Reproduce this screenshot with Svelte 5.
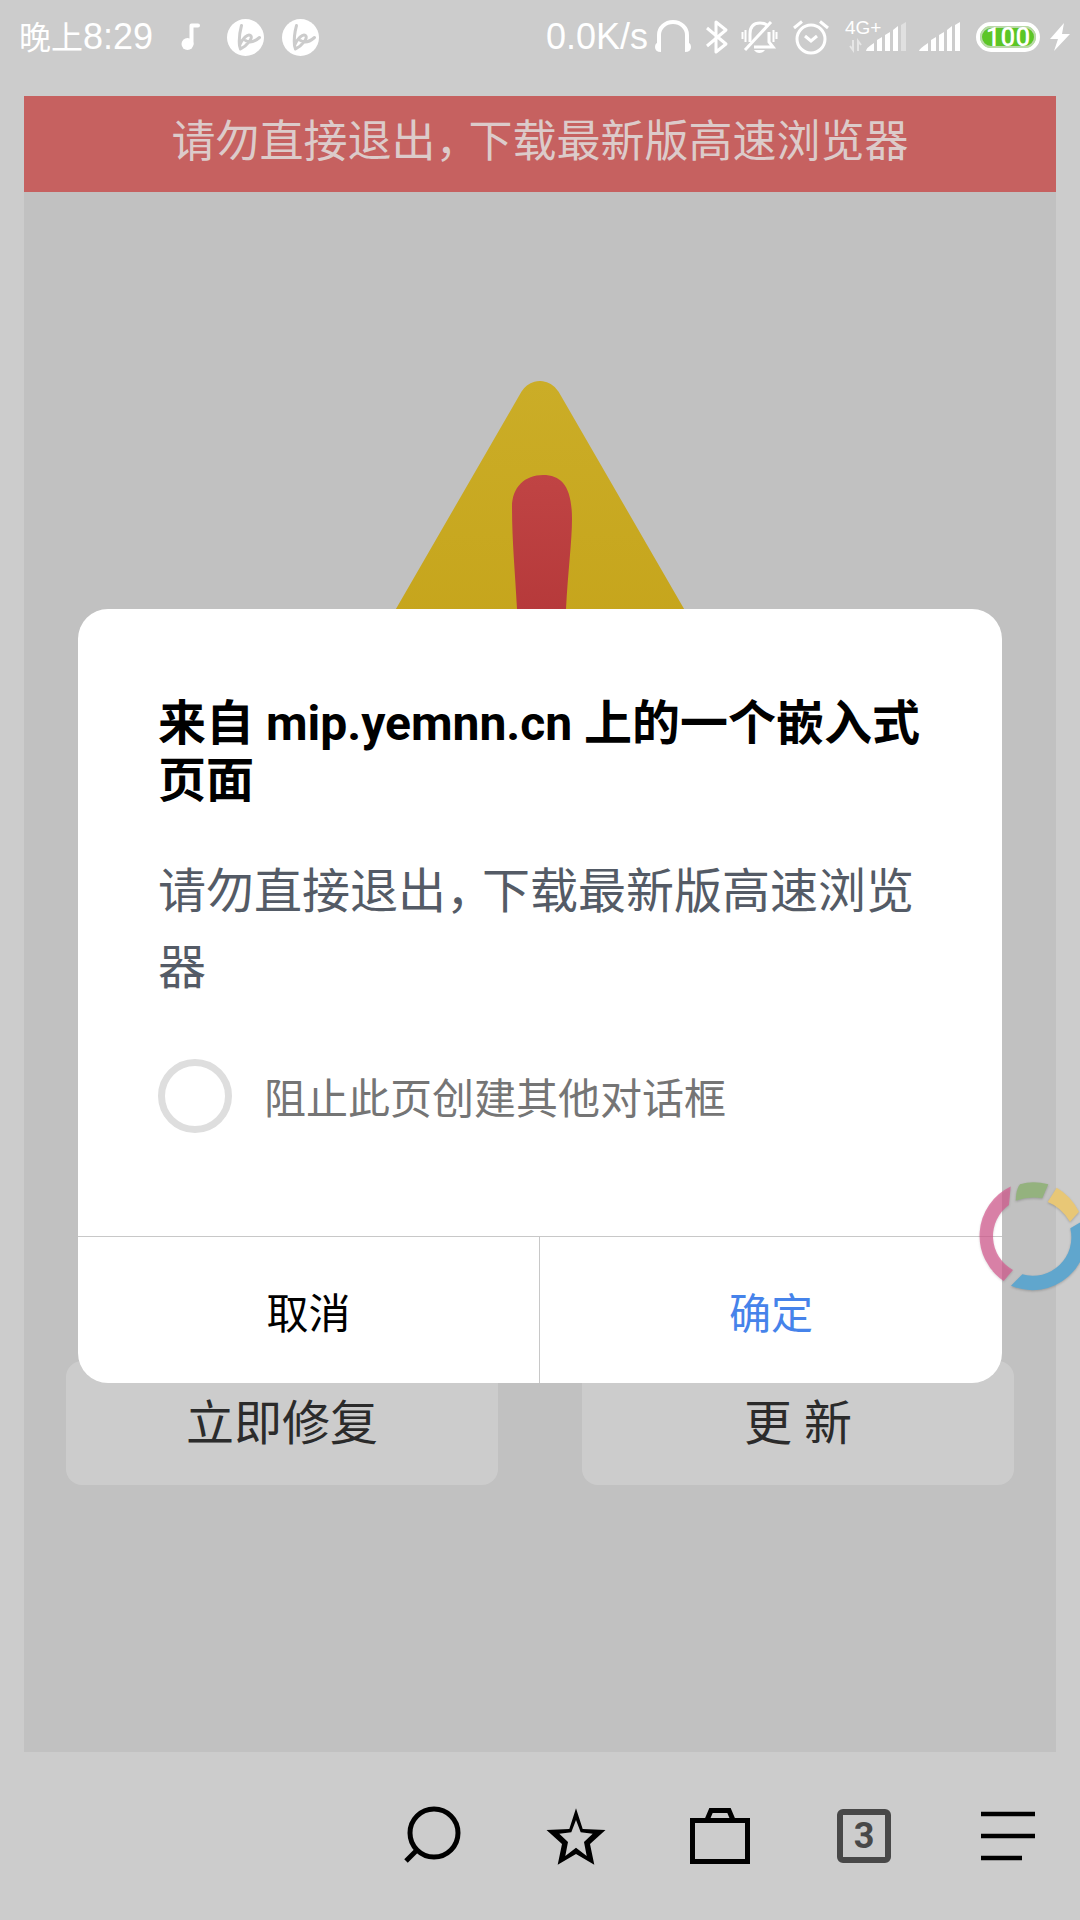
<script>
  let blockDialogs = $state(false);
  const badges = [1, 2];
</script>

<div class="screen">
  <header class="status">
    <div class="status-left">
      <span class="clock"><span class="clock-period">晚上</span>8:29</span>
      <svg class="note" width="20" height="44" viewBox="0 0 20 44" aria-hidden="true">
        <circle cx="6.500" cy="29" r="6" fill="#fff" />
        <path d="M10.500 29V10.500H17" fill="none" stroke="#fff" stroke-width="4" stroke-linecap="round" stroke-linejoin="round" />
      </svg>
      {#each badges as badge (badge)}
        <svg class="badge" width="37" height="37" viewBox="-18.500 -18.500 37 37" aria-hidden="true">
          <circle r="18.500" fill="#fff" />
          <path d="M-4-12Q-7-1-6 8C-3 1 2-4 5-2C8 0 2 8-5 11.500L-6 8M0 3Q6 7 14 0" fill="none" stroke="#ccc" stroke-width="3" stroke-linecap="round" stroke-linejoin="round" />
        </svg>
      {/each}
    </div>
    <div class="status-right">
      <span class="speed">0.0K/s</span>
      <svg width="50" height="44" viewBox="0 0 50 44" aria-hidden="true">
        <path d="M11 30V20a14 13 0 0 1 28 0V30" fill="none" stroke="#fff" stroke-width="4" />
        <path d="M13 27v10q-6 0-6-5t6-5zM37 27v10q6 0 6-5t-6-5z" fill="#fff" />
      </svg>
      <svg width="38" height="44" viewBox="0 0 38 44" aria-hidden="true">
        <path d="M9 13L28 29L18 37V7L28 15L9 31" fill="none" stroke="#fff" stroke-width="3" stroke-linejoin="round" />
      </svg>
      <svg width="48" height="44" viewBox="0 0 48 44" aria-hidden="true">
        <path d="M14 27V19Q14 8 24 8Q28 8 31 10M33 17V27L37 32H18" fill="none" stroke="#fff" stroke-width="3" />
        <path d="M9 35L35 7" stroke="#fff" stroke-width="3" />
        <path d="M18 35H29Q27 38 23.500 38T18 35z" fill="#fff" />
        <path d="M9.500 15v12M6.500 17v7M37.500 15v12M40.500 17v7" stroke="#fff" stroke-width="2" />
      </svg>
      <svg width="52" height="44" viewBox="0 0 52 44" aria-hidden="true">
        <circle cx="27" cy="24" r="14" fill="none" stroke="#fff" stroke-width="3" />
        <path d="M21 21L27 26L33 21M10 13L18 6.500M44 13L36 6.500" fill="none" stroke="#fff" stroke-width="3" />
      </svg>
      <svg width="74" height="44" viewBox="0 0 74 44" aria-hidden="true">
        <text class="net" x="9" y="19">4G+</text>
        <path d="M17 25V35L14 31M22 36V26L25 30" fill="none" stroke="#e6e6e6" stroke-width="2" />
        <path d="M30 36Q30 33 38 28V36zM41 25l5-3V36H41zM49 20l5-3V36H49zM57 15l5-4V36H57z" fill="#fff" />
        <path d="M65 10l5-3V36H65z" fill="#e0e0e0" />
      </svg>
      <svg width="58" height="44" viewBox="0 0 58 44" aria-hidden="true">
        <path d="M9 36Q9 34 18 28V36zM21 25l5-3V36H21zM29 20l5-3V36H29zM37 15l5-4V36H37zM45 10l5-3V36H45z" fill="#fff" />
      </svg>
      <span class="battery">100</span>
      <svg width="34" height="44" viewBox="0 0 34 44" aria-hidden="true">
        <path d="M18 8L4 24H12L8 36L24 19H16z" fill="#fff" />
      </svg>
    </div>
  </header>

  <main class="panel">
    <h1 class="banner">请勿直接退出<span class="comma">，</span>下载最新版高速浏览器</h1>
    <svg class="warning" width="580" height="486" viewBox="0 0 580 486" aria-hidden="true">
      <defs>
        <linearGradient id="amber" gradientUnits="userSpaceOnUse" x1="0" y1="0" x2="0" y2="486">
          <stop offset="0" stop-color="#cbad27" />
          <stop offset="0.500" stop-color="#c6a51c" />
          <stop offset="1" stop-color="#c19e12" />
        </linearGradient>
        <linearGradient id="crimson" gradientUnits="userSpaceOnUse" x1="0" y1="94" x2="0" y2="340">
          <stop offset="0" stop-color="#c04444" />
          <stop offset="1" stop-color="#ae3133" />
        </linearGradient>
      </defs>
      <path d="M290 21.500L545 463H35z" fill="url(#amber)" stroke="url(#amber)" stroke-width="43" stroke-linejoin="round" />
      <path d="M262 126C262 106 275 94 293 94C312 94 322 106 322 138C322 160 318 190 316 228L310 330Q292 345 276 330L267 228C265 190 262 160 262 126z" fill="url(#crimson)" />
    </svg>
    <div class="actions">
      <button type="button">立即修复</button>
      <button type="button">更 新</button>
    </div>
  </main>

  <nav class="toolbar">
    <button type="button" aria-label="搜索">
      <svg width="60" height="60" viewBox="0 0 60 60">
        <path d="M14 45L4 55" stroke="#000" stroke-width="5" />
        <circle cx="32" cy="27" r="24" fill="none" stroke="#000" stroke-width="5" />
      </svg>
    </button>
    <button type="button" aria-label="收藏">
      <svg width="60" height="60" viewBox="0 0 60 60">
        <path fill-rule="evenodd" d="M30 2.300L36.700 23L59.500 24L44 38L48.300 58.700L30 48L11.700 58.700L16 38L0.500 24L23.300 23zM30 14L25.300 26.300L13.300 27.700L22 36L19.300 50L30 41.700L40.700 50L38 36L46.700 27.700L34.700 26.300z" fill="#000" />
      </svg>
    </button>
    <button type="button" aria-label="工具箱">
      <svg width="60" height="60" viewBox="0 0 60 60">
        <path d="M2.500 14.500H57.500V55.500H2.500zM17 14L21 4.500H39L43 14" fill="none" stroke="#000" stroke-width="5" />
      </svg>
    </button>
    <button type="button" aria-label="标签页"><span class="tabs">3</span></button>
    <button type="button" aria-label="菜单">
      <svg width="60" height="60" viewBox="0 0 60 60">
        <path d="M3 8H57M3 30H57M3 52H44" stroke="#000" stroke-width="4.500" />
      </svg>
    </button>
  </nav>

  <div class="overlay">
    <div class="dialog" role="alertdialog" aria-modal="true" aria-labelledby="dialog-title" aria-describedby="dialog-message">
      <div class="dialog-body">
        <h2 id="dialog-title">来自 mip.yemnn.cn 上的一个嵌入式页面</h2>
        <p id="dialog-message">请勿直接退出<span class="comma">，</span>下载最新版高速浏览器</p>
        <label class="block">
          <input type="checkbox" bind:checked={blockDialogs} />
          <span>阻止此页创建其他对话框</span>
        </label>
      </div>
      <div class="dialog-buttons">
        <button type="button" class="cancel">取消</button>
        <button type="button" class="confirm">确定</button>
      </div>
    </div>
  </div>

  <svg class="ring" width="108" height="120" viewBox="0 0 108 120" aria-hidden="true">
    <path d="M38.700 10.500A54.500 54.500 0 0 0 31.700 105L41 94A38.500 38.500 0 0 1 37 29z" fill="#d5598e" fill-opacity="0.700" />
    <path d="M43.700 24.700Q44 13 48 8.300Q61 4 76.300 8.300L70.300 22.300Q57 20 43.700 24.700z" fill="#94b27e" />
    <path d="M75.700 26L84.700 11.700Q99 20 107 35.700L98 45.700Q89 31 75.700 26z" fill="#e8c776" />
    <path d="M39 109.700L50.300 98.300A38.500 38.500 0 0 0 98.300 52.300L112 44A54 54 0 0 1 39 109.700z" fill="#60a6cd" />
  </svg>
</div>

<style>
  :global(body) {
    margin: 0;
    background: #ccc;
  }

  .screen {
    position: relative;
    display: flex;
    flex-direction: column;
    min-height: 100vh;
    overflow: hidden;
    background: #ccc;
    font-family: Roboto, "Noto Sans CJK SC", sans-serif;
  }

  button {
    margin: 0;
    padding: 0;
    border: 0;
    background: none;
    color: inherit;
    font: inherit;
  }

  svg {
    display: block;
    flex: none;
  }

  .comma {
    display: inline-block;
    width: 0.75em;
    font-feature-settings: "halt";
    text-align: left;
  }

  .status {
    display: flex;
    justify-content: space-between;
    height: 72px;
    padding-top: 1px;
    margin-bottom: 23px;
    color: #fff;
    font-family: "Liberation Sans", "Noto Sans CJK SC", sans-serif;
    font-size: 36px;
    line-height: 72px;
  }

  .status-left,
  .status-right {
    display: flex;
    align-items: center;
  }

  .status-left {
    padding-left: 19px;
  }

  .clock-period {
    font-size: 32px;
  }

  .note {
    margin: 0 26px 0 28px;
  }

  .badge + .badge {
    margin-left: 18px;
  }

  .net {
    fill: #fff;
    font-size: 19px;
  }

  .battery {
    box-sizing: border-box;
    width: 64px;
    height: 30px;
    margin: 0 6px 0 8px;
    border: 4px solid #fff;
    border-radius: 15px;
    background: #5cc626;
    box-shadow: inset 0 0 0 2px #b9d8a8;
    font-family: "Liberation Sans Narrow", Roboto, sans-serif;
    font-size: 26px;
    font-weight: 500;
    line-height: 22px;
    text-align: center;
  }

  .panel {
    display: flex;
    flex: 1;
    flex-direction: column;
    margin: 0 24px;
    background: #c1c1c1;
  }

  .banner {
    margin: 0;
    padding-bottom: 4px;
    background: #c66160;
    color: #dccbca;
    font-size: 44px;
    font-weight: 400;
    line-height: 92px;
    text-align: center;
  }

  .warning {
    align-self: center;
    margin-top: 189px;
  }

  .actions {
    display: grid;
    grid-template-columns: 1fr 1fr;
    gap: 84px;
    margin-top: 494px;
    padding: 0 42px;
  }

  .actions button {
    height: 124px;
    padding-bottom: 8px;
    border-radius: 16px;
    background: #ccc;
    color: #2b2b2b;
    font-size: 48px;
  }

  .toolbar {
    display: flex;
    justify-content: flex-end;
    height: 168px;
  }

  .toolbar button {
    display: flex;
    align-items: center;
    justify-content: center;
    width: 144px;
  }

  .tabs {
    box-sizing: border-box;
    width: 54px;
    height: 54px;
    border: 6px solid #484848;
    border-radius: 6px;
    color: #484848;
    font-size: 36px;
    font-weight: 700;
    line-height: 42px;
    text-align: center;
  }

  .overlay {
    position: absolute;
    inset: 0;
    display: flex;
    flex-direction: column;
    justify-content: center;
    padding: 72px 78px 0;
  }

  .dialog {
    overflow: hidden;
    border-radius: 30px;
    background: #fff;
  }

  .dialog-body {
    padding: 86px 72px 103px 80px;
  }

  h2 {
    margin: 0;
    color: #000;
    font-size: 48px;
    font-weight: 700;
    line-height: 57px;
  }

  p {
    margin: 45px 0 0;
    color: #545b66;
    font-size: 48px;
    line-height: 76px;
  }

  .block {
    display: flex;
    align-items: center;
    gap: 32px;
    margin-top: 53px;
    color: #757575;
    font-size: 42px;
    line-height: 66px;
  }

  .block span {
    padding-top: 8px;
  }

  .block input {
    appearance: none;
    box-sizing: border-box;
    flex: none;
    width: 74px;
    height: 74px;
    margin: 0;
    border: 7px solid #dedede;
    border-radius: 50%;
    background: #fff;
  }

  .block input:checked {
    border-color: #4285f4;
  }

  .dialog-buttons {
    display: grid;
    grid-template-columns: 1fr 1fr;
    border-top: 1px solid #c8c8c8;
  }

  .dialog-buttons button {
    height: 146px;
    color: #000;
    font-size: 42px;
  }

  .dialog-buttons .cancel {
    border-right: 1px solid #c8c8c8;
  }

  .dialog-buttons .confirm {
    color: #4683ea;
  }

  .ring {
    position: absolute;
    top: 1176px;
    right: 0;
    filter: drop-shadow(0 1px 1px rgba(0, 0, 0, 0.2));
  }
</style>
